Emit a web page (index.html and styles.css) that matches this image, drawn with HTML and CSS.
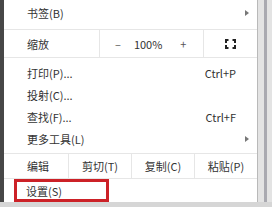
FILE: index.html
```html
<!DOCTYPE html>
<html lang="zh">
<head>
    <meta charset="UTF-8">
    <title>菜单</title>
<link rel="stylesheet" href="styles.css">
</head>
<body>
    <div class="screen">
        <div class="edge"></div>
        <div class="menu">
            <div class="item top">
                <span class="label">书签(B)</span>
                <span class="arrow"></span>
            </div>
            <div class="zoom">
                <span class="zlabel">缩放</span>
                <span class="zctl">
                    <span class="minus">–</span>
                    <span class="pct">100%</span>
                    <span class="plus">+</span>
                </span>
                <span class="full">
                    <svg width="11" height="10" viewBox="0 0 11 10">
                        <path d="M1 4V1H3.5M7.5 1H10V4M10 6V9H7.5M3.5 9H1V6" fill="none" stroke="#222" stroke-width="2"/>
                    </svg>
                </span>
            </div>
            <div class="group">
                <div class="item">
                    <span class="label">打印(P)...</span>
                    <span class="key">Ctrl+P</span>
                </div>
                <div class="item">
                    <span class="label">投射(C)...</span>
                </div>
                <div class="item">
                    <span class="label">查找(F)...</span>
                    <span class="key">Ctrl+F</span>
                </div>
                <div class="item">
                    <span class="label">更多工具(L)</span>
                    <span class="arrow"></span>
                </div>
            </div>
            <div class="edit">
                <span class="elabel">编辑</span>
                <span class="ecell">剪切(T)</span>
                <span class="ecell">复制(C)</span>
                <span class="ecell">粘贴(P)</span>
            </div>
            <div class="last">
                <div class="marked">设置(S)</div>
            </div>
        </div>
        <div class="scroll"><div class="thumb"></div></div>
    </div>
    <div class="bottom"></div>
</body>
</html>
```

FILE: styles.css
```css
body{
    margin: 0;
    background-color: #d9d9d9;
    font-family: "Microsoft YaHei", "Noto Sans CJK SC", sans-serif;
    font-size: 11px;
    color: #333;
}
.screen{
    display: flex;
    height: 202px;
}
.edge{
    width: 4px;
    background-color: #474747;
}
.menu{
    flex: 1;
    background-color: #fff;
    display: flex;
    flex-direction: column;
}
.scroll{
    width: 14px;
    background-color: #e3e3e3;
    border-left: 1px solid #b9b9b9;
    display: flex;
    justify-content: center;
}
.thumb{
    width: 3px;
    background-color: #a9a9b0;
}
.bottom{
    height: 5px;
    background-color: #d6d6d6;
}
.item{
    height: 22px;
    display: flex;
    align-items: center;
    padding: 0 8px 0 23px;
}
.item .label{
    flex: 1;
}
.item.top{
    height: 26px;
    padding-bottom: 3px;
    border-bottom: 1px solid #e6e6e6;
}
.key{
    margin-right: 13px;
}
.arrow{
    width: 0;
    height: 0;
    border-left: 4px solid #777;
    border-top: 3px solid transparent;
    border-bottom: 3px solid transparent;
}
.zoom{
    height: 27px;
    display: flex;
    align-items: center;
    border-bottom: 1px solid #e6e6e6;
}
.zlabel{
    width: 96px;
    padding-left: 23px;
    box-sizing: border-box;
    align-self: stretch;
    display: flex;
    align-items: center;
    border-right: 1px solid #e6e6e6;
}
.zctl{
    width: 103px;
    display: flex;
    align-items: center;
}
.minus{
    margin-left: 15px;
    color: #555;
}
.pct{
    margin-left: 13px;
}
.plus{
    margin-left: 18px;
    color: #555;
}
.full{
    flex: 1;
    align-self: stretch;
    display: flex;
    align-items: center;
    justify-content: center;
    border-left: 1px solid #e6e6e6;
}
.group{
    padding: 4px 0 3px;
}
.edit{
    height: 24px;
    display: flex;
    border-top: 1px solid #e6e6e6;
    border-bottom: 1px solid #e6e6e6;
}
.elabel{
    width: 64px;
    padding-left: 23px;
    box-sizing: border-box;
    display: flex;
    align-items: center;
}
.ecell{
    flex: 1;
    display: flex;
    align-items: center;
    justify-content: center;
    border-left: 1px solid #e6e6e6;
}
.last{
    flex: 1;
    padding: 0 0 0 10px;
    display: flex;
}
.marked{
    width: 80px;
    border: 3px solid #cc2127;
    padding-left: 9px;
    display: flex;
    align-items: center;
}
```
